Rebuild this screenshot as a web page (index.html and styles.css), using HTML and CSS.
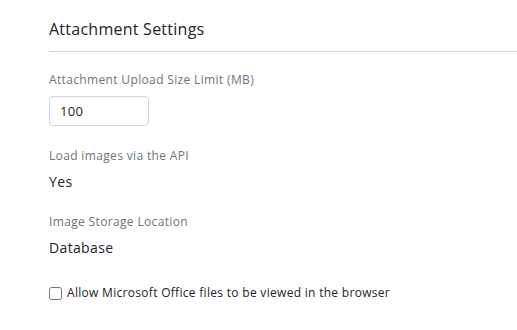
FILE: index.html
```html
<!DOCTYPE html>
<html lang="en">
<head>
  <meta charset="UTF-8" />
  <meta name="viewport" content="width=device-width, initial-scale=1.0" />
  <title>Attachment Settings</title>
  <link rel="stylesheet" href="styles.css">
</head>
<body>
  <div class="settings">
    <h2 class="settings-title">Attachment Settings</h2>

    <div class="field">
      <label class="field-label" for="uploadLimit">Attachment Upload Size Limit (MB)</label>
      <input id="uploadLimit" class="field-input" type="text" value="100">
    </div>

    <div class="field">
      <div class="field-label">Load images via the API</div>
      <div class="field-value">Yes</div>
    </div>

    <div class="field">
      <div class="field-label">Image Storage Location</div>
      <div class="field-value">Database</div>
    </div>

    <label class="check-row">
      <input type="checkbox" class="check-box">
      <span>Allow Microsoft Office files to be viewed in the browser</span>
    </label>
  </div>
</body>
</html>
```

FILE: styles.css
```css
:root {
  --text-color: #212529;
  --muted-color: #6c757d;
  --line-color: #d6d6d6;
  --input-border: #ced4da;
}
* { box-sizing: border-box; }
body {
  margin: 0;
  font-family: 'Open Sans', sans-serif;
  background: #fff;
  color: var(--text-color);
}
.settings {
  padding: 17px 0 0 49px;
  display: flex;
  flex-direction: column;
  align-items: flex-start;
}
.settings-title {
  align-self: stretch;
  margin: 0 0 19px;
  padding-bottom: 10px;
  font-size: 16px;
  font-weight: 400;
  line-height: 24px;
  letter-spacing: 0.25px;
  border-bottom: 1px solid var(--line-color);
}
.field {
  display: flex;
  flex-direction: column;
  align-items: flex-start;
  margin-bottom: 21px;
}
.field-label {
  font-size: 12px;
  line-height: 18px;
  letter-spacing: 0.35px;
  color: var(--muted-color);
  margin-bottom: 7px;
}
.field-input {
  width: 100px;
  height: 30px;
  padding: 0 10px;
  border: 1px solid var(--input-border);
  border-radius: 4px;
  font-family: inherit;
  font-size: 13px;
  letter-spacing: 0.3px;
  color: var(--text-color);
}
.field-value {
  font-size: 14px;
  line-height: 20px;
  letter-spacing: 0.35px;
}
.check-row {
  display: flex;
  align-items: center;
  gap: 5px;
  margin-top: 5px;
  font-size: 12px;
  line-height: 18px;
  letter-spacing: 0.3px;
}
.check-box {
  margin: 0;
  width: 13px;
  height: 13px;
}
```
